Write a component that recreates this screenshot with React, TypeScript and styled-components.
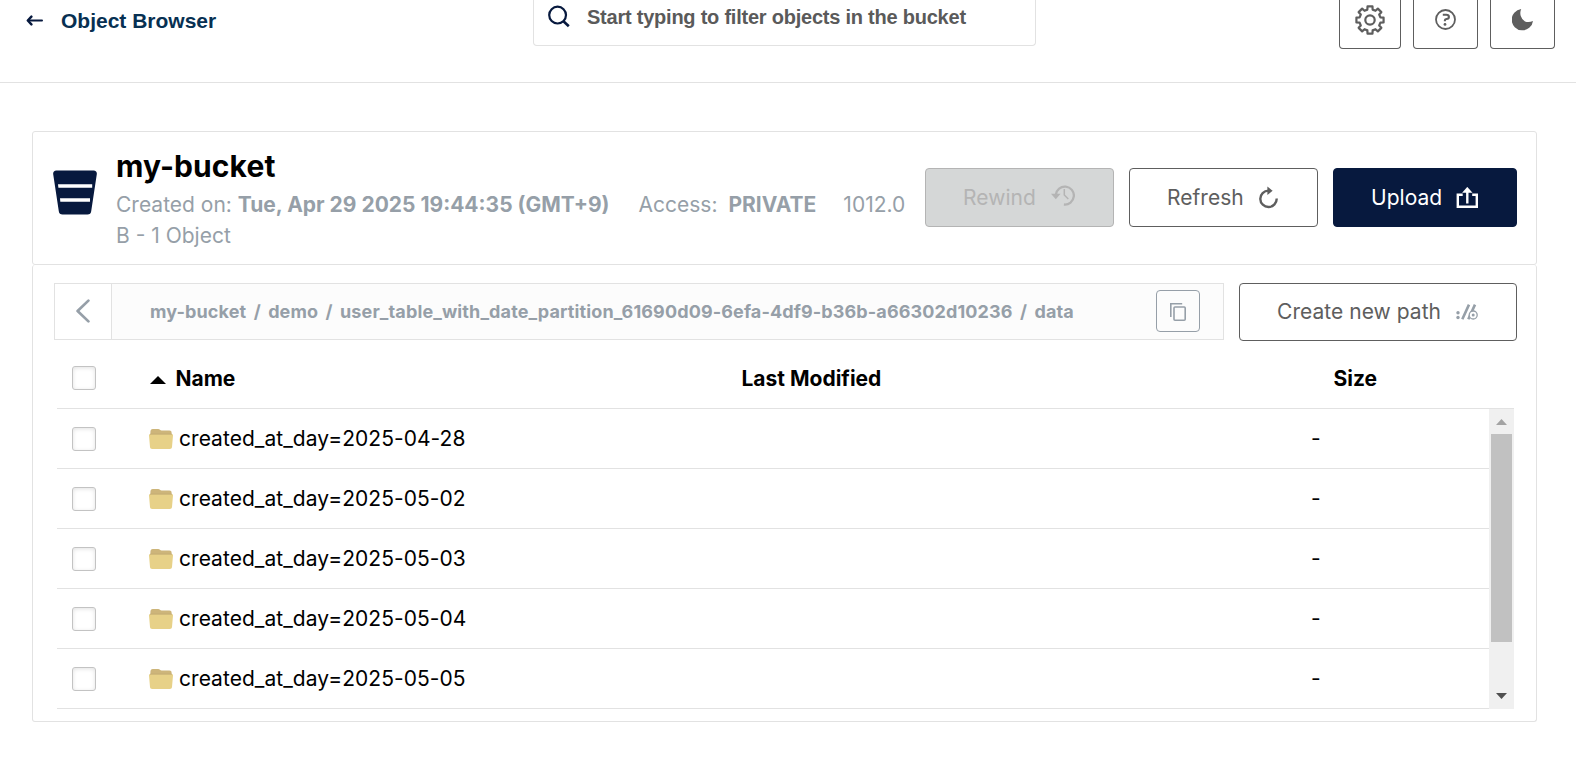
import React from 'react';
import styled, { createGlobalStyle, css } from 'styled-components';

const navy = '#07193e';
const line = '#e2e2e2';
const muted = '#969fa8';
const ink = '#5e5e5e';

const GlobalStyle = createGlobalStyle`
  * { box-sizing: border-box; }
  body {
    margin: 0;
    background: #fff;
    font-family: Inter, "Liberation Sans", sans-serif;
    color: #000;
  }
  svg { display: block; flex: none; }
`;

const Page = styled.div`
  height: 760px;
  overflow: hidden;
`;

const Header = styled.header`
  display: flex;
  align-items: flex-start;
  height: 83px;
  border-bottom: 1px solid ${line};
  font-family: "Liberation Sans", Arial, sans-serif;
`;

const BackTitle = styled.div`
  display: flex;
  align-items: center;
  gap: 18px;
  width: 533px;
  height: 41px;
  padding-left: 26px;
  font-size: 21px;
  font-weight: 700;
  color: #073052;
`;

const Search = styled.label`
  display: flex;
  align-items: flex-start;
  width: 503px;
  height: 46px;
  padding: 5px 14px 0;
  gap: 17px;
  border: 1px solid ${line};
  border-top: 0;
  border-radius: 0 0 4px 4px;
`;

const SearchInput = styled.input`
  flex: 1;
  min-width: 0;
  height: 26px;
  margin-top: -1px;
  padding: 0;
  border: 0;
  outline: 0;
  background: none;
  font: 700 20px "Liberation Sans", Arial, sans-serif;
  letter-spacing: -0.23px;
  &::placeholder { color: #5a5a5a; opacity: 1; }
`;

const Tools = styled.div`
  display: flex;
  gap: 12px;
  margin-left: 303px;
`;

const ToolButton = styled.button<{ $width: number }>`
  display: flex;
  justify-content: center;
  width: ${(p) => p.$width}px;
  height: 49px;
  padding: 5px 0 0;
  border: 1px solid ${ink};
  border-top: 0;
  border-radius: 0 0 4px 4px;
  background: #fff;
  color: ${ink};
`;

const Content = styled.main`
  padding: 48px 39px 0 32px;
`;

const Summary = styled.section`
  display: flex;
  align-items: flex-start;
  height: 134px;
  padding-left: 20px;
  padding-right: 19px;
  border: 1px solid ${line};
  border-radius: 3px;
`;

const BucketBox = styled.div`
  width: 63px;
  padding-top: 38px;
`;

const Info = styled.div`
  width: 809px;
  padding-top: 16px;
  white-space: nowrap;
`;

const Title = styled.h1`
  margin: 0;
  font-size: 30px;
  line-height: 37px;
  font-weight: 700;
  letter-spacing: 0.1px;
`;

const Meta = styled.p`
  margin: 4px 0 0;
  font-size: 21px;
  line-height: 31px;
  font-weight: 400;
  color: ${muted};
  strong { font-weight: 700; }
`;

const Gap = styled.span<{ $w: number }>`
  display: inline-block;
  width: ${(p) => p.$w}px;
`;

const Actions = styled.div`
  display: flex;
  gap: 15px;
  padding-top: 36px;
`;

const tones = {
  plain: css`border-color: ${ink}; background: #fff; color: ${ink};`,
  disabled: css`border-color: #b4b4b4; background: #d5d7d7; color: #b4b4b4;`,
  primary: css`border-color: ${navy}; background: ${navy}; color: #fff;`,
};

const Button = styled.button<{ $tone: keyof typeof tones; $width: number; $height?: number }>`
  display: flex;
  align-items: center;
  justify-content: space-between;
  width: ${(p) => p.$width}px;
  height: ${(p) => p.$height ?? 59}px;
  padding: 0 38px ${(p) => (p.$height ? 1 : 0)}px 37px;
  border: 1px solid;
  border-radius: 4px;
  font: 400 21px Inter, sans-serif;
  letter-spacing: 0.04px;
  white-space: nowrap;
  ${(p) => tones[p.$tone]}
`;

const Browser = styled.section`
  height: 457px;
  padding: 18px 19px 0 21px;
  border: 1px solid ${line};
  border-top: 0;
  border-radius: 3px;
`;

const PathBar = styled.div`
  display: flex;
  gap: 15px;
`;

const Crumbs = styled.nav`
  display: flex;
  align-items: center;
  width: 1170px;
  height: 57px;
  border: 1px solid ${line};
  background: #fcfcfc;
`;

const Back = styled.button`
  display: flex;
  align-items: center;
  justify-content: center;
  width: 57px;
  height: 55px;
  padding: 0 0 1px;
  border: 0;
  border-right: 1px solid ${line};
  background: #fff;
`;

const Trail = styled.div`
  flex: 1;
  padding-left: 38px;
  font-size: 18px;
  font-weight: 700;
  letter-spacing: 0.12px;
  color: ${muted};
  white-space: pre;
`;

const Slash = styled.span`
  margin: 0 7.4px;
`;

const CopyButton = styled.button`
  display: flex;
  align-items: center;
  justify-content: center;
  width: 44px;
  height: 42px;
  margin: 0 23px 1px 0;
  padding: 1px 0 0;
  border: 1px solid ${muted};
  border-radius: 4px;
  background: none;
`;

const Table = styled.div`
  width: 1457px;
  margin-left: 3px;
`;

const Row = styled.div<{ $head?: boolean }>`
  display: grid;
  grid-template-columns: 92px 592px ${(p) => (p.$head ? '592px' : '570px')} 1fr;
  align-items: center;
  height: ${(p) => (p.$head ? 68 : 60)}px;
  padding-top: ${(p) => (p.$head ? 6 : 1)}px;
  border-bottom: 1px solid ${line};
  font-size: 21px;
  font-weight: ${(p) => (p.$head ? 700 : 400)};
  white-space: nowrap;
`;

const Check = styled.span`
  width: 24px;
  height: 24px;
  margin-left: 15px;
  border: 1px solid #c3c3c3;
  border-radius: 3px;
  background: #fff;
  box-shadow: inset 0 1px 4px rgba(0, 0, 0, 0.12);
`;

const NameCell = styled.div<{ $gap: number }>`
  display: flex;
  align-items: center;
  gap: ${(p) => p.$gap}px;
`;

const SortMark = styled.span`
  padding: 4px 0 0 1px;
`;

const HeadLabel = styled.span`
  padding: 1px 0 0 0.5px;
`;

const Label = styled.span`
  padding-bottom: 2px;
  letter-spacing: 0.04px;
`;

const ListArea = styled.div`
  display: flex;
  height: 301px;
`;

const List = styled.div`
  flex: 1;
`;

const Scroll = styled.div`
  display: flex;
  flex-direction: column;
  align-items: center;
  justify-content: space-between;
  width: 25px;
  height: 300px;
  padding: 10px 0;
  background: #f0f0f0;
`;

const Thumb = styled.div`
  width: 21px;
  height: 208px;
  margin: 9px 0 auto;
  background: #c1c1c1;
`;

const ArrowLeft = () => (
  <svg width="17" height="12" viewBox="0 0 17 12" fill="none" stroke={navy} strokeWidth="2" strokeLinecap="round" strokeLinejoin="round">
    <path d="M16 5.500H2.400" />
    <path d="M5.400 1.600 1.800 5.500l3.600 3.900" strokeWidth="2.400" />
  </svg>
);

const SearchIcon = () => (
  <svg width="22" height="23" viewBox="0 0 22 23" fill="none" stroke={navy} strokeWidth="2.2">
    <circle cx="9.6" cy="10.1" r="8.4" />
    <path d="m15.2 16 5.600 5.200" strokeWidth="2.6" />
  </svg>
);

const gearPath = (() => {
  const pts: string[] = [];
  for (let i = 0; i < 8; i++) {
    const a = (i * Math.PI) / 4;
    const at = (r: number, d: number) =>
      `${(15 + r * Math.sin(a + d)).toFixed(2)} ${(15 - r * Math.cos(a + d)).toFixed(2)}`;
    pts.push(at(10.7, -0.25), at(13.8, -0.18), at(13.8, 0.18), at(10.7, 0.25));
  }
  return `M${pts.join('L')}Z`;
})();

const GearIcon = () => (
  <svg width="30" height="30" viewBox="0 0 30 30" fill="none" stroke={ink} strokeWidth="2.2" strokeLinejoin="round">
    <path d={gearPath} />
    <circle cx="15" cy="15" r="4.7" />
  </svg>
);

const HelpIcon = () => (
  <svg width="21" height="29" viewBox="0 -4 21 29" fill="none" stroke={ink} strokeWidth="1.8">
    <circle cx="10.5" cy="10.5" r="9.5" />
    <path d="M7.800 5.700h3.400c1.800 0 2.700.9 2.700 2.200 0 1.500-1.100 2-2.500 2.100-1 .1-1.500.5-1.500 1.300v1" strokeWidth="2.100" />
    <circle cx="10" cy="15.400" r="1.400" fill={ink} stroke="none" />
  </svg>
);

const MoonIcon = () => (
  <svg width="21" height="29" viewBox="0 -4 21 29" fill={ink}>
    <path d="M9.2 0A9.8 9.8 0 0 0 13 12.4c2.400 1 5.300.8 8-.4A10.700 10.700 0 1 1 9.200 0Z" />
  </svg>
);

const BucketIcon = () => (
  <svg width="44" height="45" viewBox="0 0 44 45">
    <path d="M3.500 .5h37A3.200 3.200 0 0 1 43.800 4.300L38.200 41.200A3.800 3.800 0 0 1 34.500 44.500H9.500A3.800 3.800 0 0 1 5.800 41.200L.2 4.300A3.200 3.200 0 0 1 3.500 .5Z" fill={navy} />
    <path d="M5 14.200h34.200v3.600H5.400zM7 28.200h30v3.600H7.300z" fill="#fff" />
  </svg>
);

const RewindIcon = () => (
  <svg width="24" height="28" viewBox="0 0 24 28" fill="none" stroke="#b4b4b4">
    <path d="M4.600 10.700A9 9 0 1 1 12.600 20.500" strokeWidth="2.300" transform="translate(0.300 0)" />
    <path d="M0 9.800h9.600L4.800 15.200Z" fill="#b4b4b4" stroke="none" />
    <path d="M13.300 5v6l4 4" strokeWidth="1.500" />
  </svg>
);

const RefreshIcon = () => (
  <svg width="20" height="24" viewBox="0 0 20 24" fill="none" stroke={ink} strokeWidth="2.400">
    <path d="M17.700 12.500A8.200 8.200 0 1 1 9.500 4.600" />
    <path d="m8.400 .6 5.200 4.200-5.200 4.200Z" fill={ink} stroke="none" />
  </svg>
);

const UploadIcon = () => (
  <svg width="22" height="22" viewBox="-0.5 0.5 22 22" fill="none" stroke="#fff" strokeWidth="2.400">
    <path d="M6.200 8.200H1.300v12h19v-12h-4.600" />
    <path d="M10.800 17V4" />
    <path d="M5.600 6.200 10.800 .4 16 6.200Z" fill="#fff" stroke="none" />
  </svg>
);

const PathIcon = () => (
  <svg width="22" height="16" viewBox="0 0 22 16" fill="none" stroke={muted}>
    <circle cx="2" cy="8.700" r="1.700" fill={muted} stroke="none" />
    <circle cx="2" cy="13.500" r="1.700" fill={muted} stroke="none" />
    <path d="M6.300 15.200 13 .6M12.300 15.200 19 .6" strokeWidth="2.600" />
    <circle cx="17.200" cy="11" r="4" fill="#fff" strokeWidth="1.300" />
    <circle cx="17.200" cy="11" r="1.500" fill={muted} stroke="none" />
  </svg>
);

const ChevronIcon = () => (
  <svg width="14" height="24" viewBox="0 0 14 24" fill="none" stroke={muted} strokeWidth="2.700" strokeLinecap="round" strokeLinejoin="round">
    <path d="M12.400 1.600 1.600 12l10.800 10.400" />
  </svg>
);

const CopyIcon = () => (
  <svg width="16" height="18" viewBox="0 0 16 18" fill="none" stroke={muted} strokeWidth="1.600">
    <rect x="4" y="4" width="11.200" height="13.200" rx="1" />
    <path d="M.8 14V.8h11.400" />
  </svg>
);

const FolderIcon = () => (
  <svg width="24" height="20" viewBox="0 0 24 20">
    <path d="M1.400 6V3c0-2 .8-3 2.400-3h5.400c1.600 0 2 1.600 3.400 1.600h7.800c1.400 0 2.200.8 2.200 2.200V6Z" fill="#cdb57a" />
    <path d="M1.600 5h20.800c1.200 0 1.700.6 1.600 1.600l-1 11.400c-.1 1.300-.9 2-2.200 2H3.200C1.900 20 1.100 19.300 1 18L0 6.600C-.1 5.600.4 5 1.600 5Z" fill="#e7d188" />
    <path d="M1 5.200h22" stroke="#bfa872" strokeWidth=".8" />
  </svg>
);

const Caret = ({ w, h, color, down }: { w: number; h: number; color: string; down?: boolean }) => (
  <svg width={w} height={h} viewBox="0 0 16 8" preserveAspectRatio="none" fill={color}>
    <path d={down ? 'M0 0h16L8 8Z' : 'M0 8h16L8 0Z'} />
  </svg>
);

const crumbs = ['my-bucket', 'demo', 'user_table_with_date_partition_61690d09-6efa-4df9-b36b-a66302d10236', 'data'];
const days = ['2025-04-28', '2025-05-02', '2025-05-03', '2025-05-04', '2025-05-05'];

export default function App() {
  return (
    <Page>
      <GlobalStyle />
      <Header>
        <BackTitle><ArrowLeft />Object Browser</BackTitle>
        <Search>
          <SearchIcon />
          <SearchInput placeholder="Start typing to filter objects in the bucket" />
        </Search>
        <Tools>
          <ToolButton $width={62}><GearIcon /></ToolButton>
          <ToolButton $width={65}><HelpIcon /></ToolButton>
          <ToolButton $width={65}><MoonIcon /></ToolButton>
        </Tools>
      </Header>
      <Content>
        <Summary>
          <BucketBox><BucketIcon /></BucketBox>
          <Info>
            <Title>my-bucket</Title>
            <Meta>
              Created on: <strong>Tue, Apr 29 2025 19:44:35 (GMT+9)</strong>
              <Gap $w={29} />Access:<Gap $w={11} /><strong>PRIVATE</strong>
              <Gap $w={27} />1012.0<br />B - 1 Object
            </Meta>
          </Info>
          <Actions>
            <Button $tone="disabled" $width={189}>Rewind<RewindIcon /></Button>
            <Button $tone="plain" $width={189}>Refresh<RefreshIcon /></Button>
            <Button $tone="primary" $width={184}>Upload<UploadIcon /></Button>
          </Actions>
        </Summary>
        <Browser>
          <PathBar>
            <Crumbs>
              <Back><ChevronIcon /></Back>
              <Trail>
                {crumbs.map((c, i) => (
                  <React.Fragment key={c}>{i > 0 && <Slash>/</Slash>}{c}</React.Fragment>
                ))}
              </Trail>
              <CopyButton><CopyIcon /></CopyButton>
            </Crumbs>
            <Button $tone="plain" $width={278} $height={58}>Create new path<PathIcon /></Button>
          </PathBar>
          <Table>
            <Row $head>
              <Check />
              <NameCell $gap={9}><SortMark><Caret w={16} h={8} color="#000" /></SortMark><HeadLabel>Name</HeadLabel></NameCell>
              <HeadLabel>Last Modified</HeadLabel>
              <HeadLabel>Size</HeadLabel>
            </Row>
            <ListArea>
              <List>
                {days.map((d) => (
                  <Row key={d}>
                    <Check />
                    <NameCell $gap={6}><FolderIcon /><Label>created_at_day={d}</Label></NameCell>
                    <span />
                    <Label>-</Label>
                  </Row>
                ))}
              </List>
              <Scroll>
                <Caret w={11} h={6} color="#a3a3a3" />
                <Thumb />
                <Caret w={11} h={6} color="#505050" down />
              </Scroll>
            </ListArea>
          </Table>
        </Browser>
      </Content>
    </Page>
  );
}
